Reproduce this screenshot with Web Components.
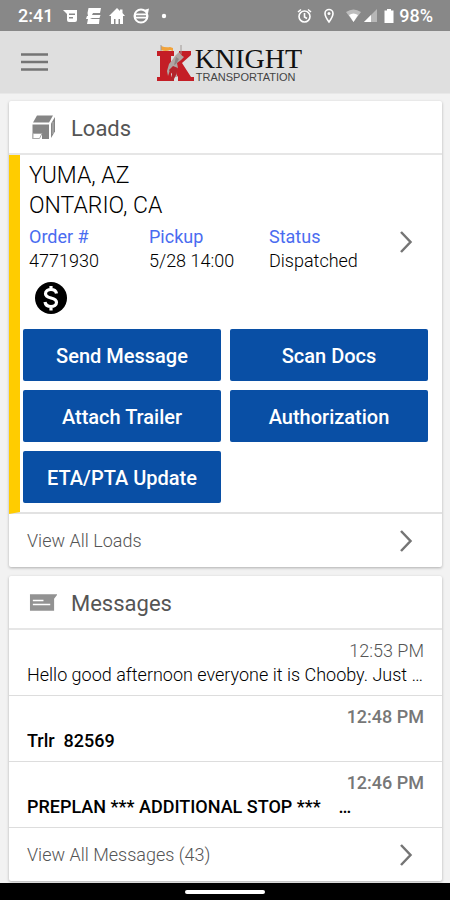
<!DOCTYPE html>
<html lang="en">
<head>
<meta charset="utf-8">
<meta name="viewport" content="width=device-width, initial-scale=1">
<title>Knight Transportation</title>
<style>
  body { margin: 0; background: #f2f2f2; font-family: Roboto, "Noto Sans", sans-serif; color: #1c1c1c; }
</style>
</head>
<body>
<driver-app></driver-app>

<template id="t-driver-app">
  <style>
    :host { display: flex; flex-direction: column; min-height: 100vh; }
    main { flex: 1; display: flex; flex-direction: column; gap: 9px; padding: 7px 8px 2px 9px; }
  </style>
  <status-bar></status-bar>
  <app-header></app-header>
  <main>
    <info-card>
      <svg slot="icon" width="28" height="28" viewBox="0 0 28 28" aria-hidden="true">
        <path d="M8 1.500h16L20 8.500H4z" fill="#858585"/>
        <path d="M26 3L22 9.500V24l4-6.500z" fill="#858585"/>
        <path d="M3.500 10.500H20V25h-7v-5H5v5H3.500z" fill="#858585"/>
        <path d="M4 24.500v-5h9l-2.500 5z" fill="#fff" stroke="#aaa" stroke-width="1"/>
        <path d="M24 8v12" stroke="#bbb" fill="none"/>
      </svg>
      <span slot="title">Loads</span>
      <load-item></load-item>
      <card-link slot="footer">View All Loads</card-link>
    </info-card>
    <info-card>
      <svg slot="icon" width="29" height="28" viewBox="0 0 29 28" aria-hidden="true">
        <path d="M1 5h28.500L26 9.500V22H1z" fill="#929292"/>
        <path d="M4 11.500h11M4 15.500h18" stroke="#fff" stroke-width="1.500"/>
      </svg>
      <span slot="title">Messages</span>
      <message-row time="12:53 PM">Hello good afternoon everyone it is Chooby. Just …</message-row>
      <message-row time="12:48 PM" unread>Trlr  82569</message-row>
      <message-row time="12:46 PM" unread>PREPLAN *** ADDITIONAL STOP ***    …</message-row>
      <card-link slot="footer">View All Messages (43)</card-link>
    </info-card>
  </main>
  <nav-bar></nav-bar>
</template>

<template id="t-status-bar">
  <style>
    :host { display: flex; align-items: center; justify-content: space-between; height: 31px; padding: 0 17px 0 18px;
      background: #888; color: #fff; font: 500 18px/20px Roboto, sans-serif; }
    div { display: flex; align-items: center; }
    .left { gap: 8px; } .time { margin-right: 2px; }
    svg { display: block; fill: #fff; }
    .right .gap { margin-right: 12px; }
    .right .batt { margin: 0 5px 0 7px; }
  </style>
  <div class="left">
    <span class="time">2:41</span>
    <svg width="15" height="16" viewBox="0 0 15 16"><path fill-rule="evenodd" d="M0 2h14v10q0 2-2 2H6q-2 0-2-2V6zM6 5.500v1.500h6V5.500zM6 9v1.500h4V9z"/></svg>
    <svg width="15" height="16" viewBox="0 0 15 16"><path d="M2.500 0H15l-1 5H7l-1 2h8.500l-1 3H6l-2 1h9.500l-.5 5H1l1-5H0l1-3h1L1.500 5z"/></svg>
    <svg width="16" height="16" viewBox="0 0 16 16"><path d="M8 0l3 3V1.500h2.500V5L16 8h-2v8h-3v-5H9.500v5h-3v-5H5v5H2V8H0z"/></svg>
    <svg width="17" height="16" viewBox="0 0 17 16"><circle cx="8" cy="8" r="6.500" fill="none" stroke="#fff" stroke-width="2"/><path d="M2 5.500h12v5H2zM11 2l5-1.500-1 5z"/><path d="M3 8h10" stroke="#888" stroke-width="1.500"/></svg>
    <svg width="14" height="16" viewBox="0 0 14 16"><circle cx="6" cy="8" r="2.200"/></svg>
  </div>
  <div class="right">
    <svg class="gap" width="15" height="16" viewBox="0 0 15 16"><circle cx="7.500" cy="8.500" r="5.500" fill="none" stroke="#fff" stroke-width="1.600"/><path d="M7.500 5v4l2.500 1.500M1 4l3-2.500M14 4l-3-2.500" fill="none" stroke="#fff" stroke-width="1.600"/></svg>
    <svg class="gap" width="10" height="16" viewBox="0 0 10 16"><path d="M5 1.500C3 1.500 1 3 1 5.500 1 8.500 5 14 5 14s4-5.500 4-8.500C9 3 7 1.500 5 1.500z" fill="none" stroke="#fff" stroke-width="1.600"/><circle cx="5" cy="5.500" r="1.500"/></svg>
    <svg width="15" height="16" viewBox="0 0 15 16"><path d="M0 4Q7.500-1 15 4L7.500 14z" opacity=".45"/><path d="M3 7q4.500-3 9 0l-4.500 7z"/></svg>
    <svg width="16" height="16" viewBox="0 0 16 16"><path d="M16 1v13H3z" opacity=".4"/><path d="M10 7v7H3z"/></svg>
    <svg class="batt" width="10" height="16" viewBox="0 0 10 16"><path d="M3 1h4v1.500h2.500V15H.5V2.500H3z"/></svg>
    <span>98%</span>
  </div>
</template>

<template id="t-app-header">
  <style>
    :host { display: grid; grid-template-columns: 1fr auto 1fr; align-items: center; height: 63px; padding: 0 9px 0 17px;
      background: #dfdfdf; box-sizing: border-box; border-bottom: 1px solid #e8e8e8; }
    button { width: 34px; height: 34px; padding: 0; border: 0; background: none; cursor: pointer; }
    svg { display: block; }
  </style>
  <button type="button" aria-label="Menu"><svg width="34" height="34" viewBox="0 0 34 34"><path d="M4 9.500h27M4 17h27M4 24.500h27" stroke="#757575" stroke-width="2.500"/></svg></button>
  <knight-logo></knight-logo>
</template>

<template id="t-knight-logo">
  <style>
    :host { display: flex; align-items: center; gap: 1px; color: #111; }
    div { display: flex; flex-direction: column; padding-top: 6px; }
    .name { font: 28px/24px "Liberation Serif", serif; }
    .sub { font: 11px/12px "Liberation Sans", sans-serif; color: #444; padding-left: 1px; }
    svg { display: block; padding-top: 2px; }
  </style>
  <svg width="38" height="38" viewBox="0 0 38 38" role="img" aria-label="Knight">
    <path d="M1 7h17v5h-3v7L26 11l-3-1V7h12v4l-9 8 9 14h3v4H22v-4l-5-7-2 2v5h3v4H1v-4h3V12H1z" fill="#c41e26"/>
    <path d="M19 12l4-4 2 3 3 2-3 3-4 3 1 5-2 3 1 6h-3l-1-5-3-2-2 6-1-5 2-7 4-5z" fill="#b0a5a2"/>
    <path d="M17 22l5 2-2 7-3 6h-3l2-7-3-4z" fill="#b3242b"/>
    <path d="M20 13l3 2-3 5-2 1z" fill="#8b8583"/>
    <path d="M5 2q5 2 9 1l3 1v3l-3-1q-4 2-9 0z" fill="#f2a33a"/>
    <path d="M5 1v6M25 1v9" stroke="#a09996" stroke-width="1"/>
  </svg>
  <div><span class="name">KNIGHT</span><span class="sub">TRANSPORTATION</span></div>
</template>

<template id="t-info-card">
  <style>
    :host { display: block; background: #fff; border-radius: 2px; box-shadow: 0 1px 3px rgba(0,0,0,.28); }
    header { display: flex; align-items: center; gap: 14px; height: 52px; box-sizing: content-box; padding: 0 20px; border-bottom: 2px solid #e6e6e6; }
    h2 { margin: 0; padding-top: 3px; font-size: 22px; line-height: 28px; font-weight: 400; color: #555; }
    .icon { display: flex; width: 28px; padding-top: 2px; }
  </style>
  <header><div class="icon"><slot name="icon"></slot></div><h2><slot name="title"></slot></h2></header>
  <slot></slot>
  <slot name="footer"></slot>
</template>

<template id="t-load-item">
  <style>
    :host { display: block; padding: 6px 14px 9px 3px; border-left: 11px solid #fc0; border-bottom: 2px solid #e2e2e2; }
    .info { display: flex; align-items: center; padding: 0 10px 0 6px; }
    .text { flex: 1; }
    .place { font-size: 23px; line-height: 30px; margin: 0; font-weight: 300; color: #000; }
    dl { display: grid; grid-template-columns: repeat(3, 1fr); margin: 4px 5px 0 0; font-size: 18px; line-height: 24px; }
    dt { color: #4a6cf0; }
    dd { margin: 0; font-weight: 300; color: #000; white-space: nowrap; }
    .pay { display: block; margin: 8px 0 14px 11px; }
    .actions { display: grid; grid-template-columns: 1fr 1fr; gap: 9px; }
    chevron-icon { margin-top: 49px; }
  </style>
  <div class="info">
    <div class="text">
      <p class="place">YUMA, AZ</p>
      <p class="place">ONTARIO, CA</p>
      <dl>
        <div><dt>Order #</dt><dd>4771930</dd></div>
        <div><dt>Pickup</dt><dd>5/28 14:00</dd></div>
        <div><dt>Status</dt><dd>Dispatched</dd></div>
      </dl>
    </div>
    <chevron-icon></chevron-icon>
  </div>
  <svg class="pay" width="34" height="34" viewBox="0 0 34 34" role="img" aria-label="Pay"><circle cx="17" cy="17" r="16"/><path d="M22.500 12.500C22 9.500 19.800 8.500 17 8.500c-3 0-5.500 1.500-5.500 4.200 0 5.600 11 3 11 8.600 0 2.700-2.500 4.200-5.500 4.200s-5.500-1.200-6-4.500M17 5v4M17 25v4.500" fill="none" stroke="#fff" stroke-width="3.200"/></svg>
  <div class="actions">
    <action-button>Send Message</action-button>
    <action-button>Scan Docs</action-button>
    <action-button>Attach Trailer</action-button>
    <action-button>Authorization</action-button>
    <action-button>ETA/PTA Update</action-button>
  </div>
</template>

<template id="t-action-button">
  <style>
    :host { display: block; }
    button { display: block; width: 100%; height: 52px; border: 0; border-radius: 2px; background: #094fa5; color: #fff;
      font: 500 20px/26px Roboto, sans-serif; cursor: pointer; padding: 2px 0 0; }
  </style>
  <button type="button"><slot></slot></button>
</template>

<template id="t-message-row">
  <style>
    :host { display: flex; flex-direction: column; height: 66px; box-sizing: border-box; padding: 9px 18px 0; border-bottom: 1px solid #ddd; }
    time { align-self: flex-end; font-size: 18px; line-height: 24px; font-weight: 300; color: #555; }
    p { margin: 0; font-size: 18px; line-height: 24px; font-weight: 300; white-space: pre; overflow: hidden; text-overflow: ellipsis; color: #000; }
    :host([unread]) time { font-weight: 500; color: #777; }
    :host([unread]) p { font-weight: 500; }
  </style>
  <time></time>
  <p><slot></slot></p>
</template>

<template id="t-card-link">
  <style>
    :host { display: block; }
    a { display: flex; align-items: center; justify-content: space-between; height: 53px; padding: 0 24px 0 18px;
      color: #555; text-decoration: none; font-size: 18px; line-height: 24px; font-weight: 300; }
  </style>
  <a href="#"><span><slot></slot></span><chevron-icon></chevron-icon></a>
</template>

<template id="t-chevron-icon">
  <style>:host { display: block; } svg { display: block; }</style>
  <svg width="24" height="24" viewBox="0 0 24 24" aria-hidden="true"><path d="M7 2l9.500 10L7 22" fill="none" stroke="#757575" stroke-width="2.500"/></svg>
</template>

<template id="t-nav-bar">
  <style>
    :host { display: flex; justify-content: center; align-items: center; height: 17px; background: #000; }
    i { width: 80px; height: 4px; border-radius: 2px; background: #fff; }
  </style>
  <i></i>
</template>

<script>
  class TemplateElement extends HTMLElement {
    constructor() {
      super();
      this.attachShadow({ mode: "open" });
    }
    connectedCallback() {
      if (this.shadowRoot.childNodes.length) return;
      const template = document.getElementById("t-" + this.localName);
      this.shadowRoot.append(template.content.cloneNode(true));
      this.render();
    }
    render() {}
  }
  class MessageRow extends TemplateElement {
    render() {
      this.shadowRoot.querySelector("time").textContent = this.getAttribute("time");
    }
  }
  customElements.define("message-row", MessageRow);
  for (const name of ["chevron-icon", "card-link", "action-button", "load-item", "info-card",
    "knight-logo", "app-header", "status-bar", "nav-bar", "driver-app"]) {
    customElements.define(name, class extends TemplateElement {});
  }
</script>
</body>
</html>
